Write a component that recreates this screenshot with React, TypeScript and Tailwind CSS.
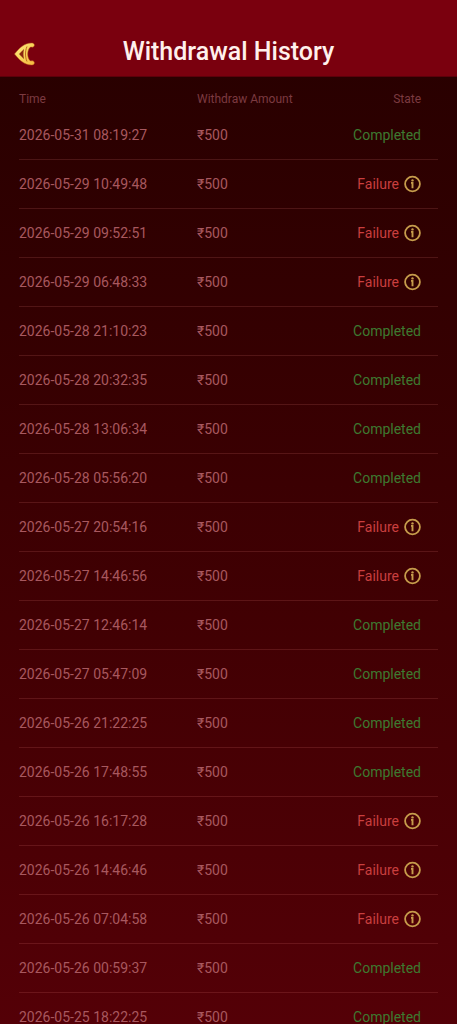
interface Withdrawal {
  time: string;
  amount: string;
  state: "Completed" | "Failure";
}

const withdrawals: Withdrawal[] = [
  { time: "2026-05-31 08:19:27", amount: "₹500", state: "Completed" },
  { time: "2026-05-29 10:49:48", amount: "₹500", state: "Failure" },
  { time: "2026-05-29 09:52:51", amount: "₹500", state: "Failure" },
  { time: "2026-05-29 06:48:33", amount: "₹500", state: "Failure" },
  { time: "2026-05-28 21:10:23", amount: "₹500", state: "Completed" },
  { time: "2026-05-28 20:32:35", amount: "₹500", state: "Completed" },
  { time: "2026-05-28 13:06:34", amount: "₹500", state: "Completed" },
  { time: "2026-05-28 05:56:20", amount: "₹500", state: "Completed" },
  { time: "2026-05-27 20:54:16", amount: "₹500", state: "Failure" },
  { time: "2026-05-27 14:46:56", amount: "₹500", state: "Failure" },
  { time: "2026-05-27 12:46:14", amount: "₹500", state: "Completed" },
  { time: "2026-05-27 05:47:09", amount: "₹500", state: "Completed" },
  { time: "2026-05-26 21:22:25", amount: "₹500", state: "Completed" },
  { time: "2026-05-26 17:48:55", amount: "₹500", state: "Completed" },
  { time: "2026-05-26 16:17:28", amount: "₹500", state: "Failure" },
  { time: "2026-05-26 14:46:46", amount: "₹500", state: "Failure" },
  { time: "2026-05-26 07:04:58", amount: "₹500", state: "Failure" },
  { time: "2026-05-26 00:59:37", amount: "₹500", state: "Completed" },
  { time: "2026-05-25 18:22:25", amount: "₹500", state: "Completed" },
];

function BackIcon() {
  return (
    <svg viewBox="0 0 22 24" className="h-6 w-[22px]" aria-hidden="true">
      <defs>
        <linearGradient id="gold" x1="0" y1="0" x2="1" y2="1">
          <stop offset="0" stopColor="#fff08a" />
          <stop offset="0.5" stopColor="#f7d45a" />
          <stop offset="1" stopColor="#f5b840" />
        </linearGradient>
      </defs>
      <path
        d="M0.500 12 C5 6.500 10 1 17.500 1 C20 1 21.200 3 19.800 4.600 C18.800 5.600 17.500 5 16.500 5 C12.800 8 12.800 16 16.500 19 C17.500 19 18.800 18.400 19.800 19.400 C21.200 21 20 23 17.500 23 C10 23 5 17.500 0.500 12 Z"
        fill="url(#gold)"
        stroke="#b8501c"
        strokeWidth="0.500"
      />
      <path d="M5 12 L10 7 C9.200 10.500 9.200 13.500 10 17 Z" fill="#8a2410" />
      <path
        d="M13 4.500 C11 9 11 15 13 19.500"
        fill="none"
        stroke="#c0681e"
        strokeWidth="1"
      />
    </svg>
  );
}

function InfoIcon() {
  return (
    <svg viewBox="0 0 18 18" className="size-[18px]" aria-hidden="true">
      <circle cx="9.500" cy="9" r="7.400" fill="none" stroke="#c69c4c" strokeWidth="1.800" />
      <circle cx="9.500" cy="5.400" r="1.200" fill="#c69c4c" />
      <path d="M8 7.900 H9.500 V13.300" fill="none" stroke="#c69c4c" strokeWidth="1.900" />
    </svg>
  );
}

export default function App() {
  return (
    <div className="flex h-dvh flex-col bg-linear-to-b from-[#260000] to-[#540007] font-['Roboto','Noto_Sans',sans-serif]">
      <header className="grid shrink-0 grid-cols-[48px_1fr_48px] items-center border-b border-[#5c000a] bg-[#7a000e] pt-7">
        <button type="button" aria-label="Back" className="flex h-12 items-center pl-3.5 pt-1">
          <BackIcon />
        </button>
        <h1 className="text-center text-[25px] font-medium text-[#fff0ec]">
          Withdrawal History
        </h1>
      </header>

      <main className="flex-1 overflow-y-auto px-[19px] [scrollbar-width:none]">
        <table className="w-full table-fixed border-separate border-spacing-0 text-left">
          <thead>
            <tr className="h-[34px] text-xs text-[#7c3a40]">
              <th scope="col" className="w-[178px] pt-2.5 font-normal">
                Time
              </th>
              <th scope="col" className="pt-2.5 font-normal">
                Withdraw Amount
              </th>
              <th scope="col" className="pr-[17px] pt-2.5 text-right font-normal">
                State
              </th>
            </tr>
          </thead>
          <tbody>
            {withdrawals.map((item) => (
              <tr key={item.time} className="h-[49px] text-sm text-[#a8585f]">
                <td className="border-b border-[#ff9090]/15">{item.time}</td>
                <td className="border-b border-[#ff9090]/15">{item.amount}</td>
                <td className="border-b border-[#ff9090]/15 pr-[17px]">
                  {item.state === "Completed" ? (
                    <div className="text-right text-[#3d7a30]">Completed</div>
                  ) : (
                    <div className="flex items-center justify-end gap-1 text-[#c93f3f]">
                      Failure
                      <button type="button" aria-label="Failure details">
                        <InfoIcon />
                      </button>
                    </div>
                  )}
                </td>
              </tr>
            ))}
          </tbody>
        </table>
      </main>
    </div>
  );
}
